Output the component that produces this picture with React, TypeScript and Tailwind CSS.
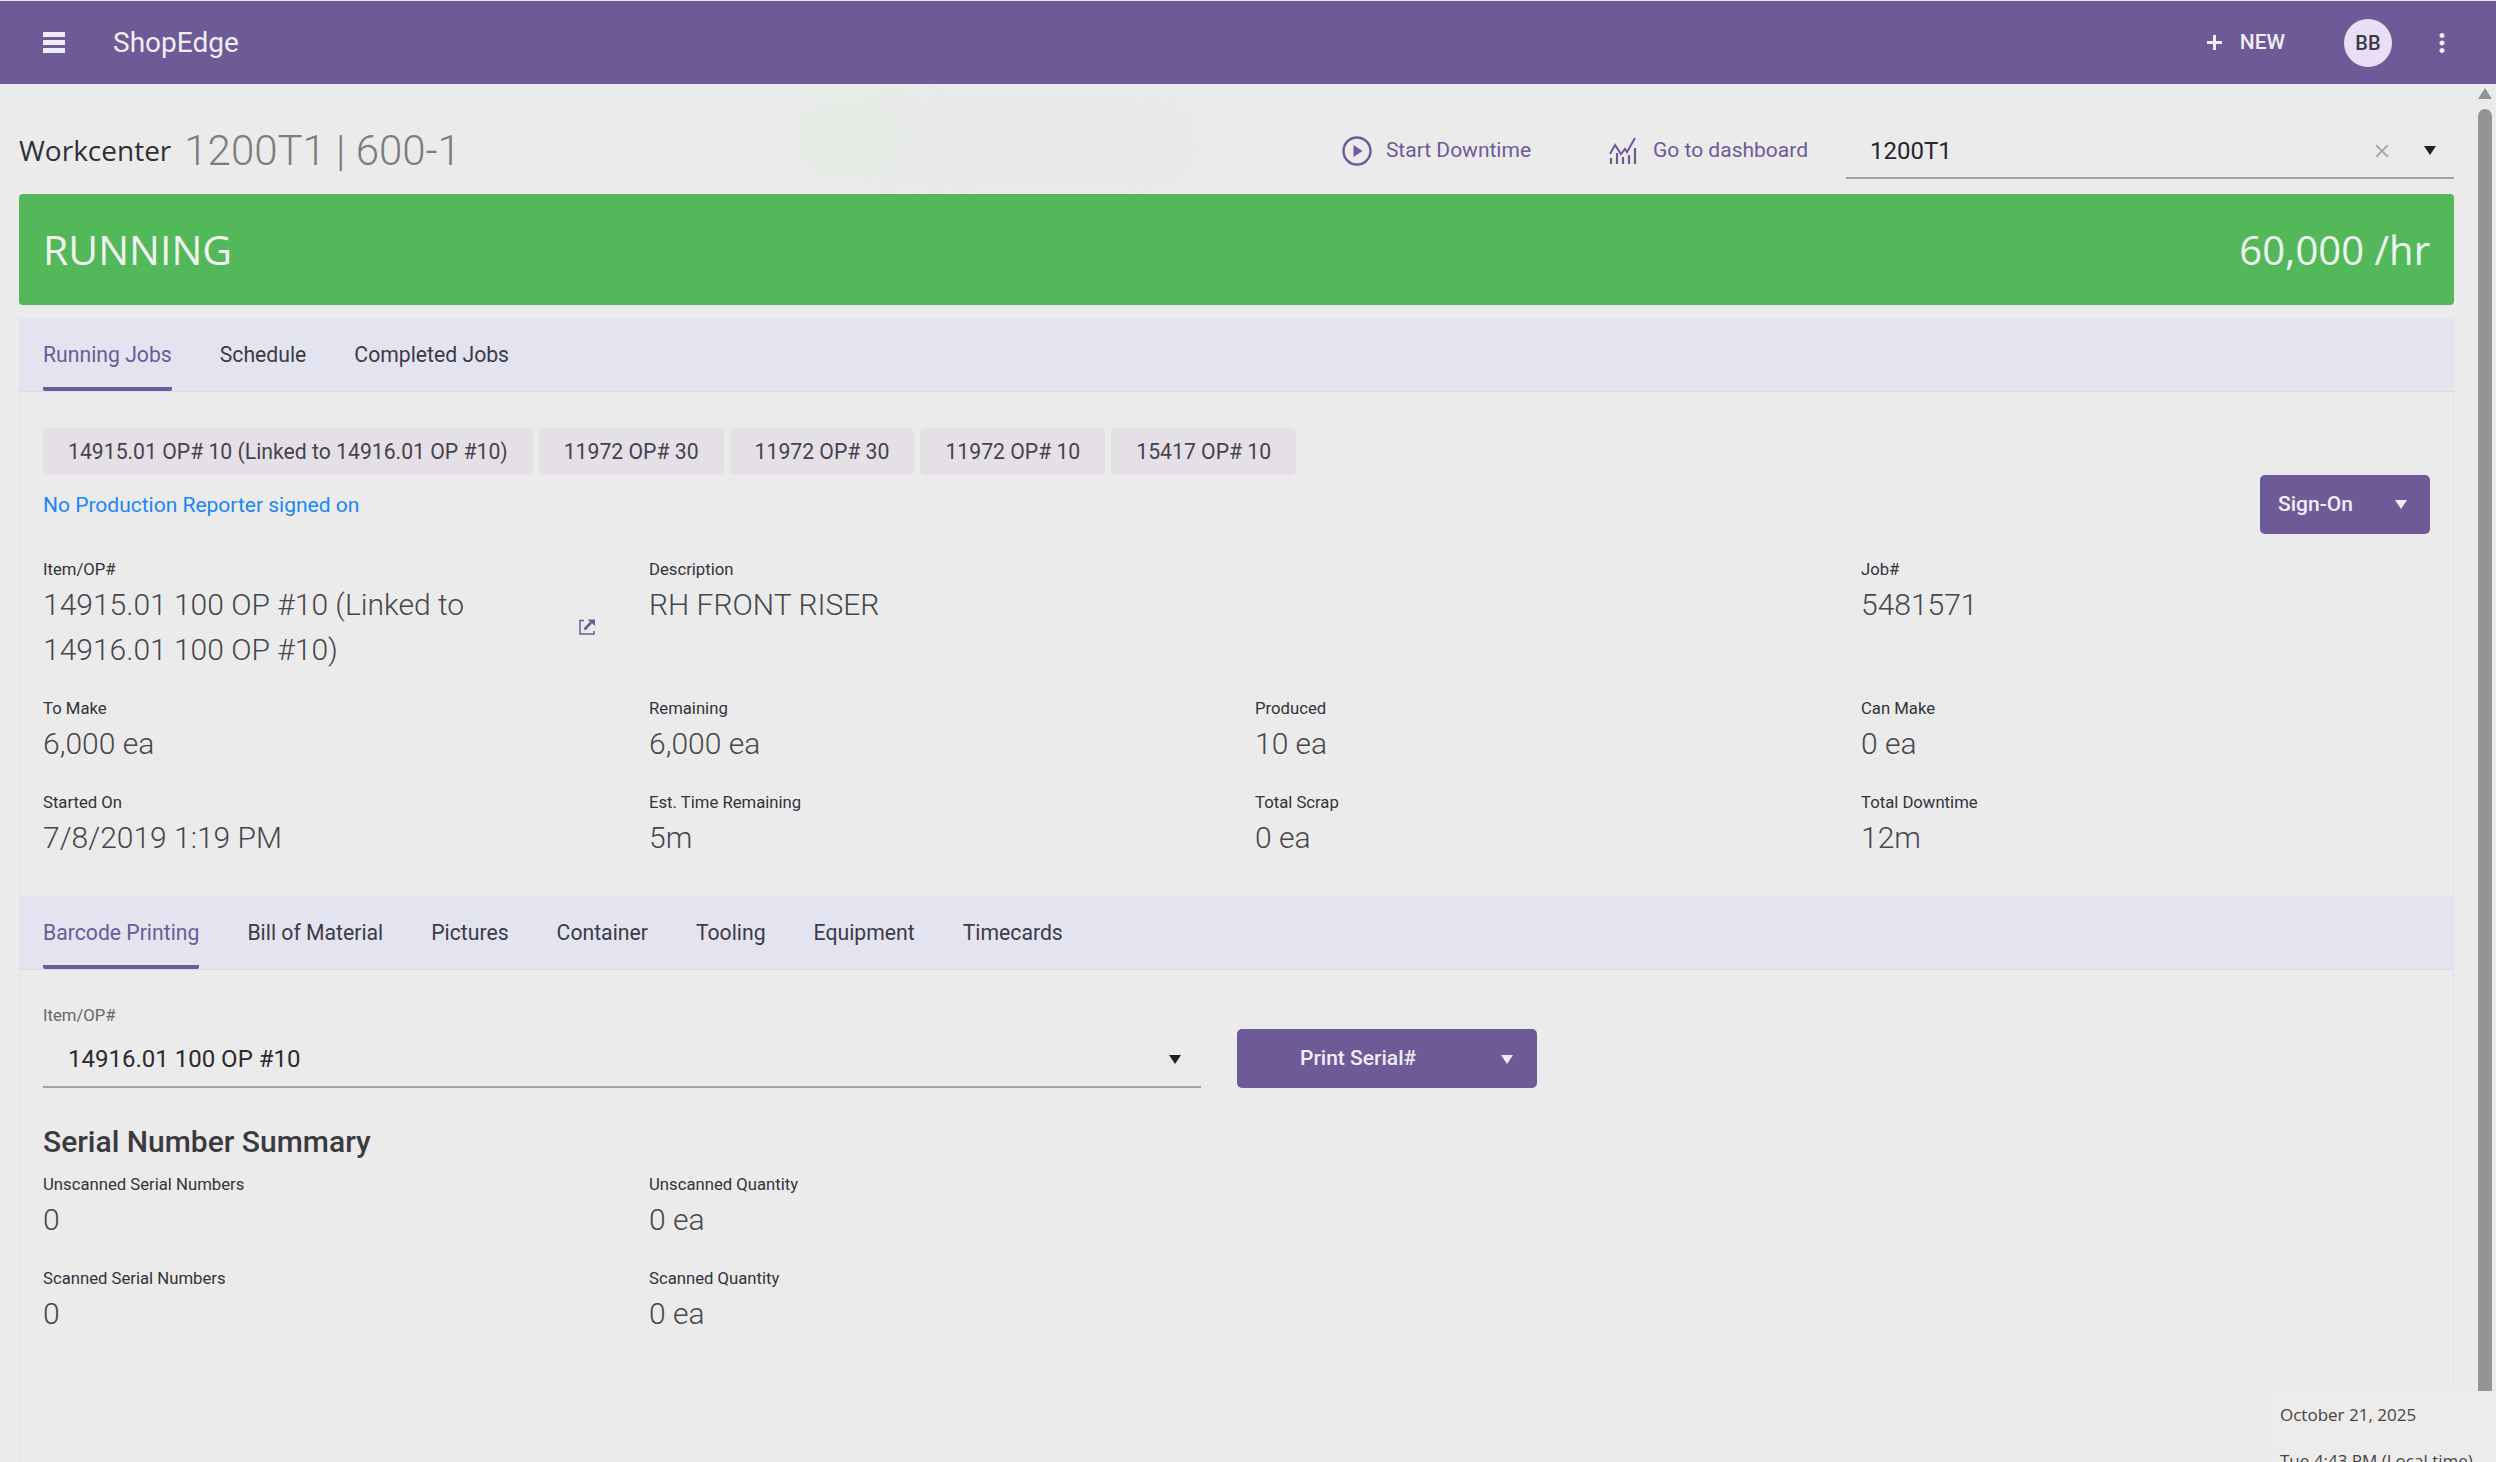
import React from 'react';
import { MdClose, MdMoreVert } from 'react-icons/md';

const Caret: React.FC<{ className?: string }> = ({ className }) => (
  <svg viewBox="0 0 12 9" className={className} fill="currentColor">
    <path d="M0 0h12L6 9z" />
  </svg>
);

const Field: React.FC<{ label: string; value: string }> = ({ label, value }) => (
  <div>
    <div className="text-[16.7px] leading-[20px] font-normal text-[#33333a]">{label}</div>
    <div className="mt-[2px] text-[30px] leading-[45px] font-light text-[#46464c]">{value}</div>
  </div>
);

const Tabs: React.FC<{ items: string[] }> = ({ items }) => (
  <div className="h-[74px] shrink-0 bg-[#e3e4ef] border-b border-[#d9dae6] rounded-t-[4px] flex pl-[24px] gap-[48px]">
    {items.map((t, i) => (
      <div
        key={t}
        className={`h-full flex items-center text-[21.2px] font-normal border-b-[4px] pt-[4px] ${
          i === 0 ? 'text-[#6e5a9a] border-[#6e5a97] rounded-b-[2px]' : 'text-[#3c3a48] border-transparent'
        }`}
      >
        {t}
      </div>
    ))}
  </div>
);

export default function App() {
  const chips = [
    '14915.01 OP# 10 (Linked to 14916.01 OP #10)',
    '11972 OP# 30',
    '11972 OP# 30',
    '11972 OP# 10',
    '15417 OP# 10',
  ];

  return (
    <div className="relative w-[2496px] h-[1462px] overflow-hidden flex flex-col bg-[#ebebeb] font-['Roboto',sans-serif]">
      {/* Top bar */}
      <header className="h-[84px] shrink-0 bg-[#6e5a97] border-t border-[#e6e3ee] flex items-center pl-[43px] pr-[39px] text-[#efedf6]">
        <div className="w-[22px] flex flex-col gap-[3px]">
          <div className="h-[5px] bg-[#efedf6]" />
          <div className="h-[5px] bg-[#efedf6]" />
          <div className="h-[5px] bg-[#efedf6]" />
        </div>
        <div className="ml-[48px] pt-[1px] text-[28px] font-normal">ShopEdge</div>
        <div className="ml-auto flex items-center gap-[18px] text-[21px] font-medium">
          <svg viewBox="0 0 15 15" className="w-[15px] h-[15px]" fill="none" stroke="currentColor" strokeWidth="3">
            <path d="M7.5 0v15M0 7.5h15" />
          </svg>
          <span>NEW</span>
        </div>
        <div className="ml-[59px] w-[48px] h-[48px] rounded-full bg-[#e6dff5] text-[#3c3a48] text-[20px] font-medium flex items-center justify-center">
          BB
        </div>
        <MdMoreVert size={30} className="ml-[35px]" />
      </header>

      <div className="flex-1 min-h-0 flex">
        <main className="w-[2478px] pl-[19px] pr-[24px] flex flex-col">
          {/* Title row */}
          <div className="relative h-[110px] shrink-0 flex items-start">
            {/* faint blurred backdrop behind the title row */}
            <div className="absolute inset-0 overflow-hidden">
              <div className="absolute left-[780px] top-[20px] w-[110px] h-[70px] bg-[#e3ebe2] blur-xl" />
              <div className="absolute left-[900px] top-[24px] w-[270px] h-[70px] bg-[#e7e7e7] blur-xl" />
            </div>

            <div className="relative mt-[35px] flex items-center gap-[13px]">
              <span className="mb-[2px] font-['Open_Sans',sans-serif] text-[28px] text-[#2f2f35]">Workcenter</span>
              <span className="text-[42px] font-light text-[#7d7d7d]">1200T1 | 600-1</span>
            </div>
            <div className="relative ml-auto mt-[51px] flex items-center text-[21px] font-normal text-[#6e5a9a]">
              <svg viewBox="0 0 30 30" className="w-[30px] h-[30px]" fill="none" stroke="currentColor" strokeWidth="2.4">
                <circle cx="15" cy="15" r="13.5" />
                <path d="M11.5 9l9 6-9 6z" fill="currentColor" stroke="none" />
              </svg>
              <span className="ml-[14px]">Start Downtime</span>
              <svg viewBox="0 0 28 27" className="ml-[78px] w-[28px] h-[27px]" fill="none" stroke="currentColor">
                <path d="M1 17L6 8l6 9 4-5 2 3 8-14" strokeWidth="2" />
                <path d="M2 27v-6M8 27V16M14 27v-7M20 27v-9M26 27V11" strokeWidth="2.2" />
              </svg>
              <span className="ml-[16px]">Go to dashboard</span>
            </div>
            <div className="relative ml-[38px] mt-[46px] w-[608px] h-[49px] pb-[6px] border-b-2 border-[#a3a3a3] flex items-center pl-[24px] pr-[18px] text-[#26262b]">
              <span className="text-[24px] font-normal">1200T1</span>
              <MdClose size={22} className="ml-auto text-[#a5a5ae]" />
              <Caret className="ml-[31px] w-[12px] h-[9px] text-[#222]" />
            </div>
          </div>

          {/* Status banner */}
          <div className="h-[111px] shrink-0 rounded-[4px] bg-[#53b85a] flex items-center justify-between px-[24px] text-[#eef5ee] font-['Open_Sans',sans-serif] font-normal">
            <span className="text-[41px]">RUNNING</span>
            <span className="text-[40px]">60,000 /hr</span>
          </div>

          <div className="mt-[13px] flex-1 flex flex-col shadow-[inset_1px_0_0_#e4e4e8,inset_-1px_0_0_#e4e4e8]">
            <Tabs items={['Running Jobs', 'Schedule', 'Completed Jobs']} />

            {/* Job details */}
            <section className="px-[24px] pt-[36px] h-[504px] shrink-0">
              <div className="flex gap-[6px]">
                {chips.map((c, i) => (
                  <div
                    key={i}
                    className="h-[47px] px-[25px] rounded-[5px] bg-[#e4e0e6] flex items-center text-[21.2px] font-normal text-[#45434f]"
                  >
                    {c}
                  </div>
                ))}
              </div>
              <div className="flex justify-between">
                <div className="mt-[17px] text-[21px] leading-[26px] text-[#1a87f5]">No Production Reporter signed on</div>
                <div className="w-[170px] h-[59px] rounded-[5px] bg-[#6e5a97] text-[#efedf6] text-[21px] font-medium flex items-center justify-between pl-[18px] pr-[23px]">
                  <span>Sign-On</span>
                  <Caret className="w-[12px] h-[9px]" />
                </div>
              </div>

              <div className="mt-[26px] grid grid-cols-[606px_606px_606px_1fr] gap-y-[27px]">
                <div>
                  <div className="text-[16.7px] leading-[20px] text-[#33333a]">Item/OP#</div>
                  <div className="mt-[2px] w-[552px] flex items-center justify-between">
                    <div className="w-[500px] text-[30px] leading-[45px] font-light text-[#46464c]">
                      14915.01 100 OP #10 (Linked to 14916.01 100 OP #10)
                    </div>
                    <svg viewBox="0 0 16 16" className="w-[16px] h-[16px] text-[#6e5a9a]" fill="none" stroke="currentColor">
                      <path d="M5 1.5H1v13.5h14V12" strokeWidth="1.5" />
                      <path d="M5.5 10.5L12 3.5" strokeWidth="2.6" />
                      <path d="M8.5 0.5H16V7z" fill="currentColor" stroke="none" />
                    </svg>
                  </div>
                </div>
                <Field label="Description" value="RH FRONT RISER" />
                <div />
                <Field label="Job#" value="5481571" />

                <Field label="To Make" value="6,000 ea" />
                <Field label="Remaining" value="6,000 ea" />
                <Field label="Produced" value="10 ea" />
                <Field label="Can Make" value="0 ea" />

                <Field label="Started On" value="7/8/2019 1:19 PM" />
                <Field label="Est. Time Remaining" value="5m" />
                <Field label="Total Scrap" value="0 ea" />
                <Field label="Total Downtime" value="12m" />
              </div>
            </section>

            <Tabs items={['Barcode Printing', 'Bill of Material', 'Pictures', 'Container', 'Tooling', 'Equipment', 'Timecards']} />

            {/* Barcode printing */}
            <section className="px-[24px]">
              <div className="flex items-end gap-[36px] mt-[36px]">
                <div className="w-[1158px]">
                  <div className="text-[16.7px] leading-[20px] text-[#66666c]">Item/OP#</div>
                  <div className="mt-[10px] h-[52px] pb-[4px] border-b-2 border-[#a3a3a3] flex items-center justify-between pl-[25px] pr-[20px]">
                    <span className="text-[24px] text-[#2a2a2f]">14916.01 100 OP #10</span>
                    <Caret className="w-[12px] h-[9px] text-[#222]" />
                  </div>
                </div>
                <div className="relative w-[300px] h-[59px] rounded-[5px] bg-[#6e5a97] text-[#efedf6] text-[21px] font-medium flex items-center pl-[63px]">
                  <span>Print Serial#</span>
                  <Caret className="absolute right-[24px] top-[26px] w-[12px] h-[9px]" />
                </div>
              </div>

              <h2 className="mt-[34px] text-[30px] leading-[40px] font-medium text-[#3a3a40]">Serial Number Summary</h2>

              <div className="mt-[13px] grid grid-cols-[606px_1fr] gap-y-[27px]">
                <Field label="Unscanned Serial Numbers" value="0" />
                <Field label="Unscanned Quantity" value="0 ea" />
                <Field label="Scanned Serial Numbers" value="0" />
                <Field label="Scanned Quantity" value="0 ea" />
              </div>
            </section>
          </div>
        </main>

        {/* Scrollbar */}
        <div className="w-[14px] flex flex-col items-center pt-[4px]">
          <div className="w-0 h-0 border-x-[7px] border-x-transparent border-b-[11px] border-b-[#949494]" />
          <div className="mt-[10px] flex-1 w-[14px] rounded-t-full bg-[#949494]" />
        </div>
      </div>

      {/* Date popover */}
      <div className="absolute left-[2266px] top-[1391px] w-[229px] h-[71px] rounded-tl-[6px] bg-[#eeeceb] px-[14px] pt-[12px] font-['Open_Sans',sans-serif] text-[17px] leading-[24px] text-[#444444] overflow-hidden">
        <div>October 21, 2025</div>
        <div className="mt-[22px] whitespace-nowrap">Tue 4:43 PM (Local time)</div>
      </div>
    </div>
  );
}
